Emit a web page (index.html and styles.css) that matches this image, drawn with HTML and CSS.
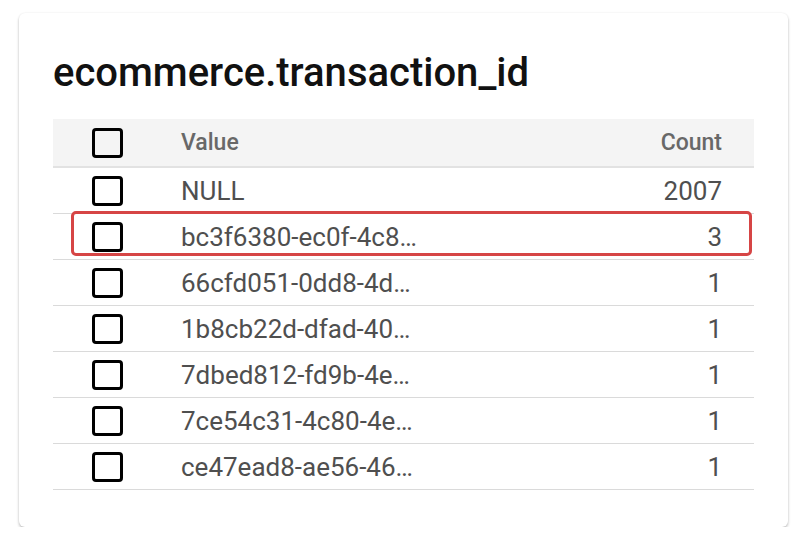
FILE: index.html
```html
<!DOCTYPE html>
<html>
<head>
<meta charset="utf-8">
<link rel="stylesheet" href="styles.css">
</head>
<body>
<div class="card">
  <h1 class="title">ecommerce.transaction_id</h1>
  <div class="table">
    <div class="row head">
      <span class="cb"></span>
      <span class="val">Value</span>
      <span class="cnt">Count</span>
    </div>
    <div class="row"><span class="cb"></span><span class="val">NULL</span><span class="cnt">2007</span></div>
    <div class="row hl"><span class="cb"></span><span class="val">bc3f6380-ec0f-4c8…</span><span class="cnt">3</span></div>
    <div class="row"><span class="cb"></span><span class="val">66cfd051-0dd8-4d…</span><span class="cnt">1</span></div>
    <div class="row"><span class="cb"></span><span class="val">1b8cb22d-dfad-40…</span><span class="cnt">1</span></div>
    <div class="row"><span class="cb"></span><span class="val">7dbed812-fd9b-4e…</span><span class="cnt">1</span></div>
    <div class="row"><span class="cb"></span><span class="val">7ce54c31-4c80-4e…</span><span class="cnt">1</span></div>
    <div class="row"><span class="cb"></span><span class="val">ce47ead8-ae56-46…</span><span class="cnt">1</span></div>
  </div>
</div>
</body>
</html>
```

FILE: styles.css
```css
html, body {
  margin: 0;
  padding: 0;
  background: #ffffff;
}
body {
  padding: 13px 0 0 19px;
  font-family: Roboto, "Liberation Sans", sans-serif;
}
.card {
  width: 769px;
  height: 514px;
  box-sizing: border-box;
  background: #fff;
  border-radius: 6px;
  box-shadow: 0 2px 3px rgba(0,0,0,0.24), 0 0 2px rgba(0,0,0,0.08);
  padding: 40px 34px 0 34px;
}
.title {
  margin: 0 0 26px 0;
  font-size: 40px;
  line-height: 40px;
  font-weight: 500;
  color: #111;
  letter-spacing: 0;
}
.table {
  display: flex;
  flex-direction: column;
}
.row {
  position: relative;
  display: grid;
  grid-template-columns: 128px 1fr auto;
  align-items: center;
  height: 46px;
  box-sizing: border-box;
  border-bottom: 1.5px solid #dadada;
  font-size: 26px;
  color: #4f4f4f;
}
.row.head {
  height: 49px;
  background: #f4f4f4;
  border-bottom: 2px solid #e2e2e2;
  font-size: 23px;
  font-weight: 500;
  color: #686868;
}
.cb {
  width: 31px;
  height: 30px;
  box-sizing: border-box;
  border: 3.5px solid #000;
  border-radius: 4px;
  margin-left: 39px;
}
.cnt {
  padding-right: 32px;
  text-align: right;
}
.row.hl::after {
  content: "";
  position: absolute;
  left: 18px;
  right: 2px;
  top: -3px;
  bottom: 3px;
  border: 3px solid #d64545;
  border-radius: 5px;
}
```
